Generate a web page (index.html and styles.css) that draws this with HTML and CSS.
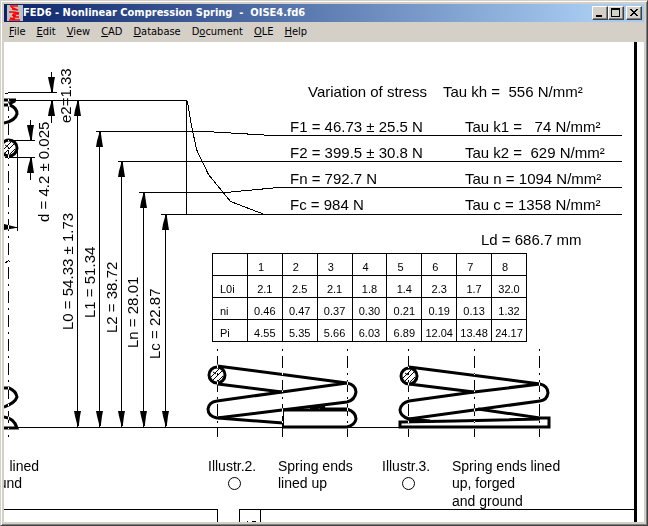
FILE: index.html
```html
<!DOCTYPE html>
<html lang="en">
<head>
<meta charset="utf-8">
<title>FED6 - Nonlinear Compression Spring</title>
<link rel="stylesheet" href="styles.css">
</head>
<body>
<div class="window">
  <header class="titlebar">
    <svg class="app-icon" width="16" height="16" viewBox="0 0 16 16" aria-hidden="true">
      <rect width="16" height="16" fill="#c0c0c0"/>
      <path d="M3 1h8M4 2l7 3M11 5L5 4M2 7h4l6 1M12 9H6M5 10l4 1M12 12H6M3 13l5 1M2 15h11" fill="none" stroke="#f00" stroke-width="1.300"/>
    </svg>
    <h1 class="title">FED6 - Nonlinear Compression Spring  -  OISE4.fd6</h1>
    <div class="controls">
      <button class="control" aria-label="Minimize"><svg width="12" height="10" viewBox="0 0 12 10"><path d="M2 7h6v2H2z"/></svg></button>
      <button class="control" aria-label="Maximize"><svg width="12" height="10" viewBox="0 0 12 10"><path d="M1 0h9v9H1zM2 2v6h7V2z" fill-rule="evenodd"/></svg></button>
      <button class="control control-close" aria-label="Close"><svg width="12" height="10" viewBox="0 0 12 10"><path d="M2 1h2v1h1v1h2V2h1V1h2v1H9v1H8v1H7v1h1v1h1v1h1v1H8V7H7V6H5v1H4v1H2V7h1V6h1V5h1V4H4V3H3V2H2z"/></svg></button>
    </div>
  </header>
  <nav class="menubar">
    <button class="menu"><u>F</u>ile</button>
    <button class="menu"><u>E</u>dit</button>
    <button class="menu"><u>V</u>iew</button>
    <button class="menu"><u>C</u>AD</button>
    <button class="menu"><u>D</u>atabase</button>
    <button class="menu">D<u>o</u>cument</button>
    <button class="menu"><u>O</u>LE</button>
    <button class="menu"><u>H</u>elp</button>
  </nav>
  <main class="canvas">
    <svg class="drawing" role="img" aria-label="Compression spring drawing">
      <defs>
        <path id="down" d="M-3 -15h7l-1 5l-1 8v2h-2v-2l-2 -8z"/>
        <path id="up" d="M0 0h2v2l1 7l1 6h-7l1 -6l2 -7z"/>
        <g id="wire">
          <circle r="8" fill="#fff" stroke="#000" stroke-width="3"/>
          <path class="hatch" d="M-6 2L2 -6M-4 5L5 -4M1 6L6 1M-4 -3l3 2"/>
        </g>
      </defs>
      <g transform="translate(-4 -42)">
        <!-- sheet frame and title block -->
        <path d="M634 42h3v480h-3z"/>
        <g class="thin" transform="translate(.5 .5)">
          <path d="M0 509H217V522M239 522V509H634M260 509V522M246 521h1M251 521h4"/>
          <!-- dimension and extension lines -->
          <path d="M8 92H56M4 93H8M4 100H186V214M51 71V92M51 101V122"/>
          <path d="M8 140H34M4 157H34M30 119V140M30 157V179M17 148V230M4 227H17M4 262H6V261H9"/>
          <path d="M77 100V427M99 131V427M121 161V427M143 192V427M165 214V427M4 427H400"/>
          <path d="M95 131H205L272 135H621M117 161H621M138 192H225L278 187H621M160 214H621"/>
          <path d="M187 101L190 120L196 149L208 174L230 201L264 214"/>
        </g>
        <use href="#down" x="51" y="92"/><use href="#up" x="51" y="101"/>
        <use href="#down" x="30" y="140"/><use href="#up" x="30" y="158"/>
        <use href="#up" x="77" y="101"/><use href="#up" x="99" y="132"/><use href="#up" x="121" y="162"/><use href="#up" x="143" y="193"/><use href="#up" x="165" y="215"/>
        <use href="#down" x="77" y="426"/><use href="#down" x="99" y="426"/><use href="#down" x="121" y="426"/><use href="#down" x="143" y="426"/><use href="#down" x="165" y="426"/>
        <path d="M4 224l12 3v1l-12 2z"/>

        <!-- side view at the left edge -->
        <g class="thick">
          <path d="M4 100H16M4 105H9M9 104L15 101M10 105Q17 108 17 114Q15 121 4 123"/>
          <path d="M4 388H9Q16 391 17 397Q15 403 4 407M4 417Q14 418 17 428H4"/>
        </g>
        <use href="#wire" x="9" y="148"/>

        <!-- spring ends lined up -->
        <g class="thick">
          <path d="M217 366L347 383Q356 385 356 392Q355 400 347 402L282 410L217 418Q208 416 208 409Q209 402 217 401L282 392L347 383"/>
          <path d="M218 384L282 392M218 418L283 423M310 408L325 406M320 409H347Q356 412 356 419Q355 425 347 427H283M283 410H347"/>
        </g>
        <path class="thin" d="M282.500 410V427M283.500 410V427"/>
        <use href="#wire" x="217" y="375"/>

        <!-- spring ends lined up, forged and ground -->
        <g class="thick">
          <path d="M409 367L540 384Q548 386 548 393Q547 400 540 401L474 410L409 419Q400 416 400 410Q401 403 409 401L474 392L540 384"/>
          <path d="M409 384L474 392M478 409L540 418H549V427H400V422L455 421L540 419M409 419L430 421"/>
        </g>
        <use href="#wire" x="409" y="376"/>

        <g class="axes" transform="translate(.5 0)">
          <path d="M8 92V437M217 349V437M282 349V437M347 349V437M408 349V437M474 349V437M539 349V437"/>
        </g>
        <g class="ring"><circle cx="234.500" cy="483.500" r="6"/><circle cx="408.500" cy="483.500" r="6"/></g>

        <g class="label">
          <text x="308" y="97">Variation of stress</text><text x="443" y="97">Tau kh =  556 N/mm²</text>
          <text x="290" y="132">F1 = 46.73 ± 25.5 N</text><text x="465" y="132">Tau k1 =   74 N/mm²</text>
          <text x="290" y="158">F2 = 399.5 ± 30.8 N</text><text x="465" y="158">Tau k2 =  629 N/mm²</text>
          <text x="290" y="184">Fn = 792.7 N</text><text x="465" y="184">Tau n = 1094 N/mm²</text>
          <text x="290" y="210">Fc = 984 N</text><text x="465" y="210">Tau c = 1358 N/mm²</text>
          <text x="481" y="245">Ld = 686.7 mm</text>
          <text transform="translate(71 123) rotate(-90)">e2=1.33</text>
          <text transform="translate(49 222) rotate(-90)">d = 4.2 ± 0.025</text>
          <text transform="translate(73 330) rotate(-90)">L0 = 54.33 ± 1.73</text>
          <text transform="translate(95 318) rotate(-90)">L1 = 51.34</text>
          <text transform="translate(117 333) rotate(-90)">L2 = 38.72</text>
          <text transform="translate(138 348) rotate(-90)">Ln = 28.01</text>
          <text transform="translate(160 359) rotate(-90)">Lc = 22.87</text>
        </g>
        <g class="caption">
          <text x="39" y="471" text-anchor="end">lined</text><text x="22" y="488" text-anchor="end">und</text>
          <text x="208" y="471">Illustr.2.</text><text x="278" y="471">Spring ends</text><text x="278" y="488">lined up</text>
          <text x="382" y="471">Illustr.3.</text><text x="452" y="471">Spring ends lined</text><text x="452" y="488">up, forged</text><text x="452" y="506">and ground</text>
        </g>
      </g>
    </svg>
    <table class="segments">
      <thead>
        <tr><td></td><th>1</th><th>2</th><th>3</th><th>4</th><th>5</th><th>6</th><th>7</th><th>8</th></tr>
      </thead>
      <tbody>
        <tr><th>L0i</th><td>2.1</td><td>2.5</td><td>2.1</td><td>1.8</td><td>1.4</td><td>2.3</td><td>1.7</td><td>32.0</td></tr>
        <tr><th>ni</th><td>0.46</td><td>0.47</td><td>0.37</td><td>0.30</td><td>0.21</td><td>0.19</td><td>0.13</td><td>1.32</td></tr>
        <tr><th>Pi</th><td>4.55</td><td>5.35</td><td>5.66</td><td>6.03</td><td>6.89</td><td>12.04</td><td>13.48</td><td>24.17</td></tr>
      </tbody>
    </table>
  </main>
</div>
</body>
</html>
```
FILE: styles.css
```css
* {
  box-sizing: border-box;
}

body {
  margin: 0;
  background: #d4d0c8;
  color: #000;
  font-family: "DejaVu Sans Condensed", "DejaVu Sans", sans-serif;
  font-size: 11px;
}

.window {
  display: flex;
  flex-direction: column;
  height: 100vh;
  padding: 3px;
  background: #d4d0c8;
  border: 1px solid;
  border-color: #d4d0c8 #404040 #404040 #d4d0c8;
  box-shadow: inset 1px 1px #fff, inset -1px -1px #808080;
}

.titlebar {
  display: flex;
  align-items: center;
  height: 18px;
  padding: 0 2px 0 3px;
  background: linear-gradient(90deg, #0a246a, #a6caf0 calc(100% - 54px));
}

.app-icon {
  flex: none;
}

.title {
  flex: 1;
  margin: 0;
  color: #fff;
  font-size: 11px;
  font-weight: bold;
  line-height: 18px;
  white-space: pre;
  overflow: hidden;
}

.controls {
  display: flex;
}

.control {
  display: block;
  width: 16px;
  height: 14px;
  padding: 1px;
  background: #d4d0c8;
  border: 1px solid;
  border-color: #fff #404040 #404040 #fff;
  box-shadow: inset -1px -1px #808080;
}

.control svg {
  display: block;
}

.control-close {
  margin-left: 2px;
}

.menubar {
  display: flex;
  gap: 11px;
  height: 20px;
  padding: 0 5px;
}

.menu {
  padding: 0;
  background: none;
  border: 0;
  color: inherit;
  font: inherit;
  line-height: 20px;
}

.canvas {
  position: relative;
  flex: 1;
  min-height: 0;
  background: #fff;
  overflow: hidden;
  isolation: isolate;
}

.drawing {
  display: block;
  width: 100%;
  height: 100%;
}

.thin {
  fill: none;
  stroke: #000;
  stroke-width: 1px;
  shape-rendering: crispEdges;
}

.thick {
  fill: none;
  stroke: #000;
  stroke-width: 3px;
}

.hatch,
.ring {
  fill: none;
  stroke: #000;
  stroke-width: 1px;
}

/* Centre lines invert whatever they cross. */
.axes {
  fill: none;
  stroke: #fff;
  stroke-dasharray: 2 5 12 5;
  shape-rendering: crispEdges;
  mix-blend-mode: difference;
}

.label,
.caption {
  font-family: "Liberation Sans", Arial, sans-serif;
}

.label text {
  white-space: pre;
}

.label {
  font-size: 15px;
}

.caption {
  font-size: 14px;
}

.segments {
  position: absolute;
  left: 208px;
  top: 211px;
  border-collapse: collapse;
  table-layout: fixed;
  width: 315px;
  font-family: "Liberation Sans", Arial, sans-serif;
  font-size: 11px;
}

.segments th,
.segments td {
  height: 22px;
  padding: 4px 0 0;
  border: 1px solid #000;
  font-weight: normal;
  line-height: 16px;
  text-align: center;
}

.segments thead th {
  padding-left: 10px;
  text-align: left;
}

.segments tbody th {
  padding-left: 7px;
  text-align: left;
}
```
